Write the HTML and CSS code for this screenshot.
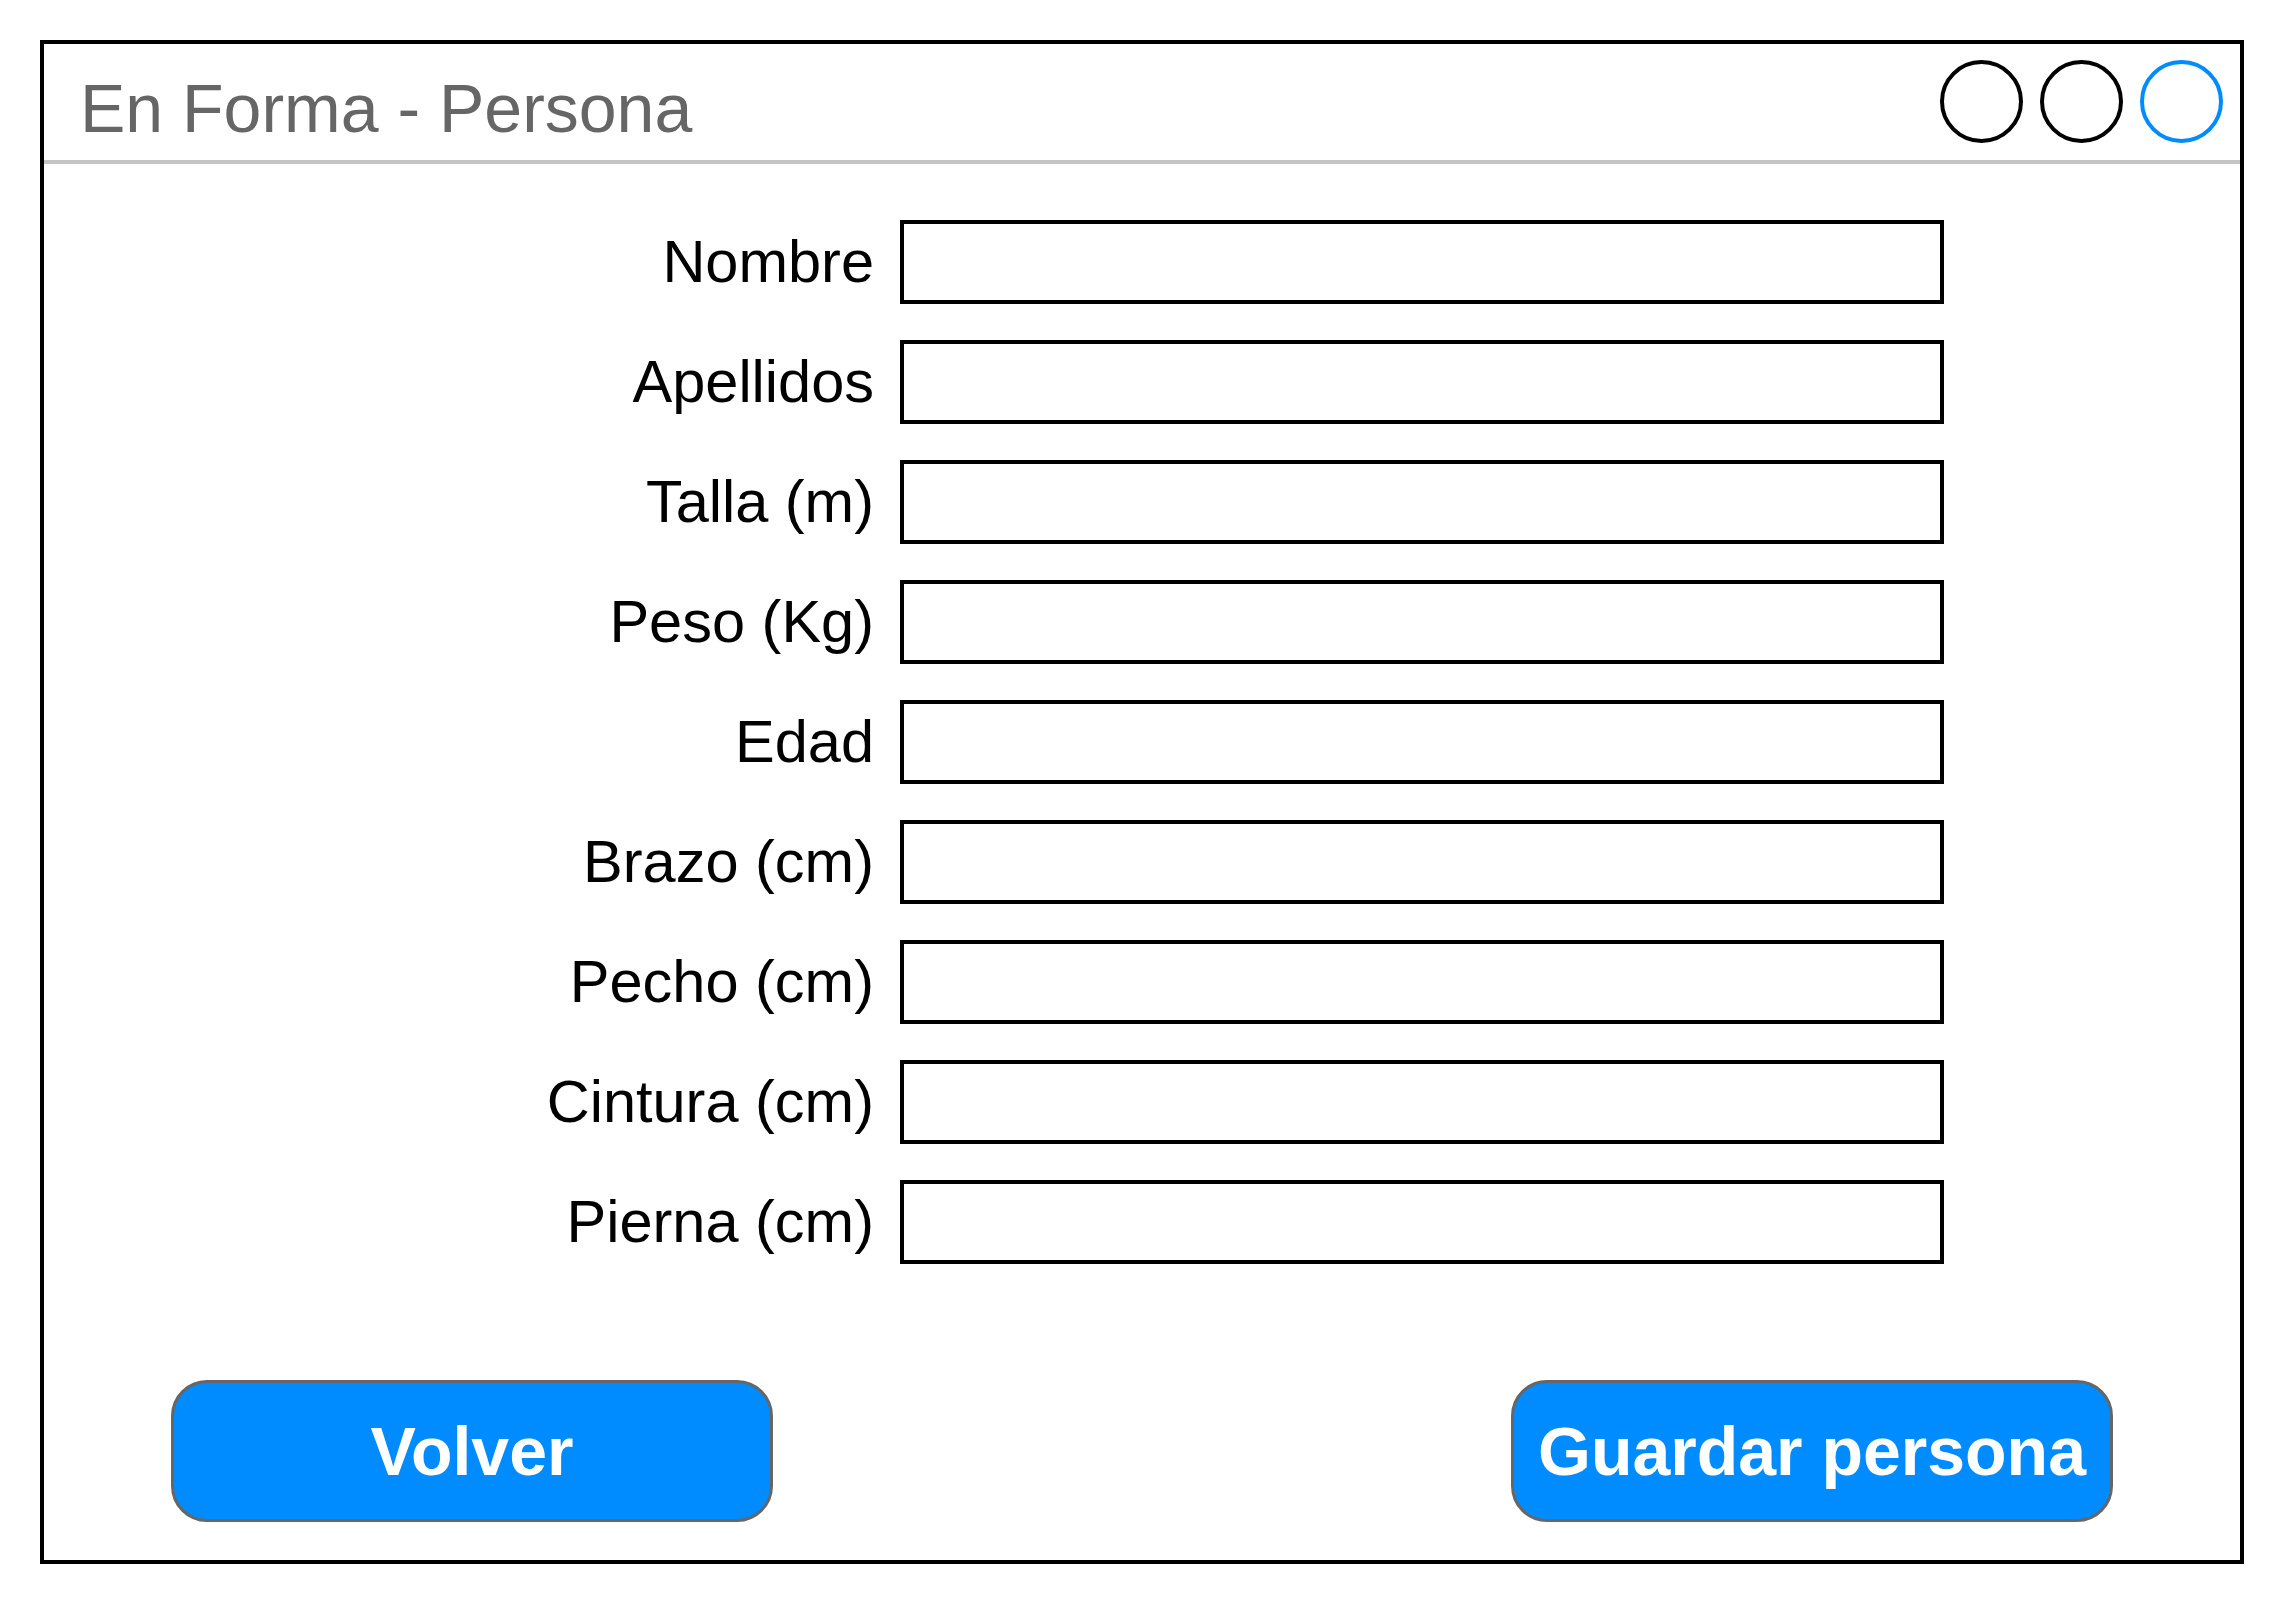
FILE: index.html
```html
<!DOCTYPE html>
<html lang="es">
<head>
<meta charset="utf-8">
<title>En Forma - Persona</title>
<link rel="stylesheet" href="styles.css">
</head>
<body>
<div class="window">
  <div class="titlebar">
    <div class="title">En Forma - Persona</div>
    <div class="controls">
      <span class="dot"></span>
      <span class="dot"></span>
      <span class="dot dot-blue"></span>
    </div>
  </div>
  <form class="form">
    <label class="label" for="f1">Nombre</label><input class="field" id="f1" type="text">
    <label class="label" for="f2">Apellidos</label><input class="field" id="f2" type="text">
    <label class="label" for="f3">Talla (m)</label><input class="field" id="f3" type="text">
    <label class="label" for="f4">Peso (Kg)</label><input class="field" id="f4" type="text">
    <label class="label" for="f5">Edad</label><input class="field" id="f5" type="text">
    <label class="label" for="f6">Brazo (cm)</label><input class="field" id="f6" type="text">
    <label class="label" for="f7">Pecho (cm)</label><input class="field" id="f7" type="text">
    <label class="label" for="f8">Cintura (cm)</label><input class="field" id="f8" type="text">
    <label class="label" for="f9">Pierna (cm)</label><input class="field" id="f9" type="text">
  </form>
  <div class="actions">
    <button class="btn" type="button">Volver</button>
    <button class="btn" type="button">Guardar persona</button>
  </div>
</div>
</body>
</html>
```
FILE: styles.css
```css
* { box-sizing: border-box; }
html, body { margin: 0; padding: 0; background: #fff; }
body { font-family: "Liberation Sans", Arial, Helvetica, sans-serif; }

.window {
  margin: 40px 0 0 40px;
  width: 2204px;
  height: 1524px;
  border: 4px solid #000;
  background: #fff;
  display: flex;
  flex-direction: column;
}

.titlebar {
  height: 120px;
  border-bottom: 4px solid #c4c4c4;
  display: flex;
  align-items: center;
  justify-content: space-between;
  padding: 0 17px 0 36px;
}

.title {
  align-self: flex-start;
  margin-top: 25px;
  font-size: 68px;
  line-height: 78px;
  color: #666;
  white-space: nowrap;
}

.controls {
  display: flex;
  gap: 17px;
  margin-top: -2px;
}

.dot {
  width: 83px;
  height: 83px;
  border-radius: 50%;
  border: 4px solid #000;
}
.dot-blue { border-color: #008cff; }

.form {
  margin: 56px 0 0 0;
  display: grid;
  grid-template-columns: 830px 1044px;
  grid-auto-rows: 84px;
  column-gap: 26px;
  row-gap: 36px;
  align-items: center;
}

.label {
  text-align: right;
  font-size: 59.5px;
  line-height: 84px;
  color: #000;
  white-space: nowrap;
}

.field {
  width: 1044px;
  height: 84px;
  border: 4px solid #000;
  border-radius: 0;
  background: #fff;
  margin: 0;
  padding: 0 10px;
  font: inherit;
  outline: none;
}

.actions {
  margin-top: 116px;
  padding: 0 127px;
  display: flex;
  justify-content: space-between;
}

.btn {
  width: 602px;
  height: 142px;
  border: 3px solid #666;
  border-radius: 36px;
  background: #008cff;
  color: #fff;
  font-family: "Liberation Sans", Arial, Helvetica, sans-serif;
  font-weight: bold;
  font-size: 68px;
  padding: 0;
  margin: 0;
  white-space: nowrap;
}
```
